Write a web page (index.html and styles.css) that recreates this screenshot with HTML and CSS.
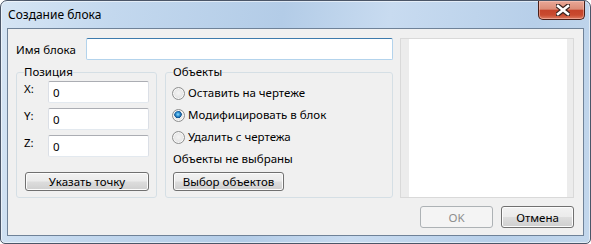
FILE: index.html
```html
<!DOCTYPE html>
<html lang="ru">
<head>
  <meta charset="UTF-8">
  <meta name="viewport" content="width=device-width, initial-scale=1.0">
  <title>Создание блока</title>
  <link rel="stylesheet" href="styles.css">
</head>
<body>
  <div class="window">
    <div class="titlebar">
      <span class="title">Создание блока</span>
      <button class="close-btn" type="button">
        <svg width="14" height="12" viewBox="0 0 14 12">
          <path d="M2 2 L12 10 M12 2 L2 10" stroke="#3a2420" stroke-width="5" stroke-linecap="square" fill="none"/>
          <path d="M2 2 L12 10 M12 2 L2 10" stroke="#ffffff" stroke-width="2.6" stroke-linecap="square" fill="none"/>
        </svg>
      </button>
    </div>

    <div class="client">
      <div class="main-col">
        <div class="name-row">
          <label class="name-label">Имя блока</label>
          <input type="text" class="text-input focused">
        </div>

        <div class="groups">
          <fieldset class="group pos-group">
            <legend>Позиция</legend>
            <div class="coords">
              <div class="coord-row"><label>X:</label><input type="text" class="text-input" value="0"></div>
              <div class="coord-row"><label>Y:</label><input type="text" class="text-input" value="0"></div>
              <div class="coord-row"><label>Z:</label><input type="text" class="text-input" value="0"></div>
            </div>
            <button type="button" class="btn point-btn">Указать точку</button>
          </fieldset>

          <fieldset class="group obj-group">
            <legend>Объекты</legend>
            <div class="options">
              <label class="radio"><input type="radio" name="mode"> Оставить на чертеже</label>
              <label class="radio"><input type="radio" name="mode" checked> Модифицировать в блок</label>
              <label class="radio"><input type="radio" name="mode"> Удалить с чертежа</label>
              <div class="status">Объекты не выбраны</div>
            </div>
            <button type="button" class="btn select-btn">Выбор объектов</button>
          </fieldset>
        </div>
      </div>

      <div class="preview">
        <div class="preview-inner"></div>
      </div>

      <div class="footer">
        <button type="button" class="btn dlg-btn" disabled>OK</button>
        <button type="button" class="btn dlg-btn">Отмена</button>
      </div>
    </div>
  </div>
</body>
</html>
```

FILE: styles.css
```css
body {
  margin: 0;
  font-family: "Noto Sans", "Open Sans", sans-serif;
  font-size: 11.5px;
  color: #000;
  background: #fff;
}
.window {
  width: 591px;
  height: 244px;
  box-sizing: border-box;
  border: 1px solid #4b5668;
  border-radius: 7px 7px 5px 5px;
  background: linear-gradient(100deg, #d6e5f4 0%, #c3d8ee 18%, #b3cce7 45%, #c8dbf0 62%, #b7cfe9 85%, #c3d7ec 100%);
  box-shadow: inset 0 0 0 1px rgba(255, 255, 255, 0.55);
  overflow: hidden;
}
.titlebar {
  height: 27px;
  display: flex;
  align-items: flex-start;
}
.title {
  padding: 6px 0 0 7px;
  font-size: 12px;
  line-height: 16px;
  color: #000;
}
.close-btn {
  margin-left: auto;
  margin-right: 5px;
  width: 47px;
  height: 19px;
  padding: 0;
  border: 1px solid #4a1f18;
  border-top: none;
  border-radius: 0 0 5px 5px;
  background: linear-gradient(#e9a897 0%, #dc8c77 45%, #c5432a 52%, #c94a2f 78%, #dd7c62 100%);
  box-shadow: inset 0 0 0 1px rgba(255, 210, 200, 0.45);
  display: flex;
  align-items: center;
  justify-content: center;
}
.close-btn svg {
  display: block;
  margin-left: 2px;
}
.client {
  margin: 0 6px;
  height: 208px;
  box-sizing: border-box;
  border: 1px solid #6f8298;
  background: #f0f0f0;
  padding: 9px 9px 0 8px;
  display: grid;
  grid-template-columns: 377px 174px;
  grid-template-rows: 160px 22px;
  column-gap: 7px;
  row-gap: 8px;
}
.name-row {
  display: flex;
  align-items: center;
  height: 22px;
}
.name-label {
  width: 70px;
  flex: none;
}
.text-input {
  box-sizing: border-box;
  height: 22px;
  margin: 0;
  padding: 0 4px;
  font-family: inherit;
  font-size: 11.5px;
  background: #fff;
  border: 1px solid #dbdfe6;
  border-top-color: #abadb3;
  border-bottom-color: #e3e9ef;
  border-radius: 2px;
  outline: none;
}
.name-row .text-input {
  flex: 1;
  min-width: 0;
}
.text-input.focused {
  border-color: #b3d3ec;
  border-top-color: #3d7bad;
}
.groups {
  display: flex;
  gap: 8px;
  margin-top: 4px;
}
.group {
  margin: 0;
  padding: 0 7px;
  min-width: 0;
  box-sizing: border-box;
  height: 134px;
  border: 1px solid #d5dfe5;
  border-radius: 3px;
}
.group legend {
  padding: 0;
  line-height: 16px;
}
.pos-group {
  width: 141px;
}
.obj-group {
  width: 228px;
}
.coords {
  display: flex;
  flex-direction: column;
  gap: 5px;
  margin-top: 1px;
}
.coord-row {
  display: flex;
  align-items: flex-start;
}
.coord-row label {
  width: 24px;
  line-height: 16px;
}
.coord-row .text-input {
  width: 101px;
}
.btn {
  box-sizing: border-box;
  margin: 0;
  padding: 0;
  font-family: inherit;
  font-size: 11.5px;
  color: #000;
  border: 1px solid #707070;
  border-radius: 3px;
  background: linear-gradient(#f2f2f2 0%, #ebebeb 48%, #dddddd 52%, #cfcfcf 100%);
  box-shadow: inset 0 0 0 1px #fcfcfc;
}
.btn:disabled {
  color: #8d8d8d;
  border-color: #adb2b5;
  background: #f4f4f4;
  box-shadow: none;
}
.point-btn {
  display: block;
  width: 124px;
  height: 19px;
  margin: 15px 0 0 1px;
}
.options {
  display: flex;
  flex-direction: column;
  gap: 6px;
  margin-top: 5px;
}
.radio {
  display: flex;
  align-items: center;
  gap: 3px;
  line-height: 16px;
  margin-left: -1px;
}
.radio input {
  appearance: none;
  width: 13px;
  height: 13px;
  margin: 0;
  border: 1px solid #8e8f8f;
  border-radius: 50%;
  box-sizing: border-box;
  background: radial-gradient(circle at 50% 45%, #f4f4f4 0%, #e6e6e6 55%, #d0d0d0 100%);
  box-shadow: inset 0 0 0 1px #f8f8f8;
}
.radio input:checked {
  background:
    radial-gradient(circle at 45% 40%, #8fe0ff 0px, #2f8fd1 2px, #0f4f8c 3.5px, transparent 4px),
    radial-gradient(circle at 50% 45%, #f4f4f4 0%, #e6e6e6 55%, #d0d0d0 100%);
}
.status {
  line-height: 16px;
}
.select-btn {
  display: block;
  width: 111px;
  height: 19px;
  margin-top: 5px;
}
.preview {
  box-sizing: border-box;
  border: 1px solid #d9d9d9;
  background: #ececec;
  padding: 0 6px 0 8px;
}
.preview-inner {
  height: 100%;
  background: #fff;
}
.footer {
  grid-column: 1 / -1;
  display: flex;
  justify-content: flex-end;
  gap: 8px;
}
.dlg-btn {
  width: 73px;
  height: 22px;
}
```
